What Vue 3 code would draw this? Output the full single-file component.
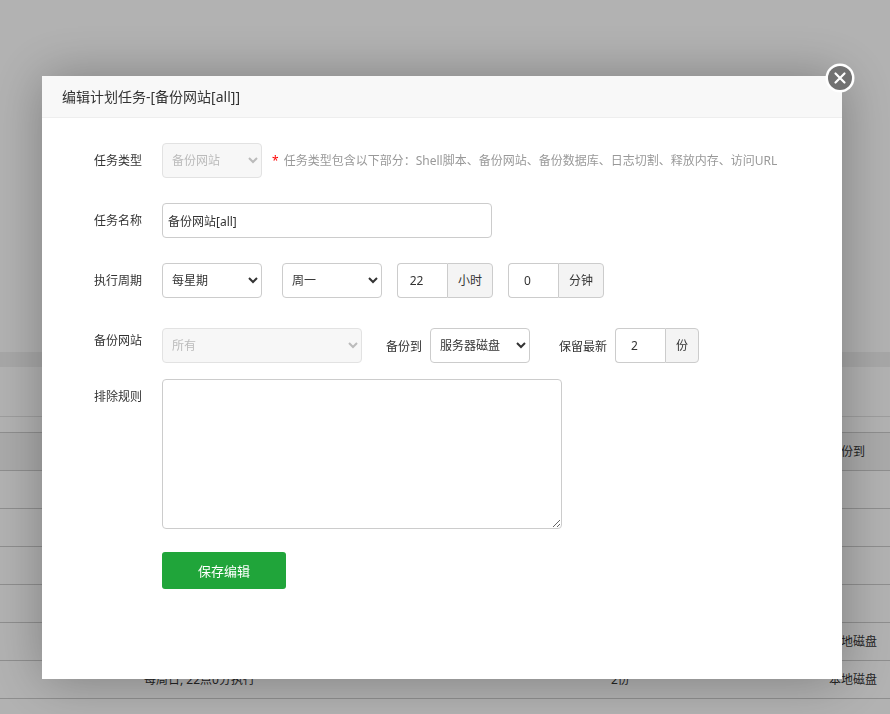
<template>
  <div class="page">
    <div class="panel"></div>
    <div class="list">
      <div class="listTop"></div>
      <table class="taskTable">
        <thead>
          <tr>
            <th class="colCheck"></th>
            <th class="colCycle"></th>
            <th class="colCount"></th>
            <th>备份到</th>
          </tr>
        </thead>
        <tbody>
          <tr v-for="(item, index) in tasks" :key="index">
            <td></td>
            <td>{{ item.cycle }}</td>
            <td>{{ item.count }}</td>
            <td>{{ item.target }}</td>
          </tr>
        </tbody>
      </table>
    </div>
  </div>

  <div class="overlay">
    <div class="dialog" role="dialog" aria-labelledby="dialogTitle">
      <div class="title" id="dialogTitle">编辑计划任务-[备份网站[all]]</div>
      <button class="close" type="button" aria-label="关闭">
        <svg width="30" height="30" viewBox="0 0 30 30">
          <circle cx="15" cy="15" r="14.5" fill="#fff" />
          <circle cx="15" cy="15" r="12" fill="#717171" />
          <path
            d="M10.5 10.5l9 9M19.5 10.5l-9 9"
            stroke="#fff"
            stroke-width="2.2"
            stroke-linecap="round"
          />
        </svg>
      </button>

      <form class="form" @submit.prevent>
        <div class="line">
          <label class="name" for="type">任务类型</label>
          <div class="info">
            <select id="type" v-model="form.type" disabled>
              <option>备份网站</option>
            </select>
            <p class="hint">
              <span class="star">*</span>
              任务类型包含以下部分：Shell脚本、备份网站、备份数据库、日志切割、释放内存、访问URL
            </p>
          </div>
        </div>

        <div class="line">
          <label class="name" for="taskName">任务名称</label>
          <div class="info">
            <input id="taskName" class="nameInput" type="text" v-model="form.name" />
          </div>
        </div>

        <div class="line">
          <label class="name" for="cycle">执行周期</label>
          <div class="info">
            <select id="cycle" v-model="form.cycle">
              <option v-for="item in cycles" :key="item">{{ item }}</option>
            </select>
            <select class="week" v-model="form.week" aria-label="星期">
              <option v-for="item in weeks" :key="item">{{ item }}</option>
            </select>
            <div class="group">
              <input id="hour" type="number" v-model="form.hour" />
              <label for="hour">小时</label>
            </div>
            <div class="group">
              <input id="minute" type="number" v-model="form.minute" />
              <label for="minute">分钟</label>
            </div>
          </div>
        </div>

        <div class="line siteLine">
          <label class="name" for="site">备份网站</label>
          <div class="info">
            <select id="site" class="siteSelect" v-model="form.site" disabled>
              <option>所有</option>
            </select>
            <label class="inlineName" for="target">备份到</label>
            <select id="target" v-model="form.target">
              <option>服务器磁盘</option>
            </select>
            <label class="inlineName keepName" for="keep">保留最新</label>
            <div class="group keep">
              <input id="keep" type="number" v-model="form.keep" />
              <label for="keep">份</label>
            </div>
          </div>
        </div>

        <div class="line ruleLine">
          <label class="name" for="rules">排除规则</label>
          <div class="info">
            <textarea id="rules" v-model="form.rules"></textarea>
          </div>
        </div>

        <button class="save" type="submit">保存编辑</button>
      </form>
    </div>
  </div>
</template>

<script setup>
import { ref } from "vue";

const cycles = ["每天", "每星期", "每月"];
const weeks = ["周一", "周二", "周三", "周四", "周五", "周六", "周日"];

const form = ref({
  type: "备份网站",
  name: "备份网站[all]",
  cycle: "每星期",
  week: "周一",
  hour: 22,
  minute: 0,
  site: "所有",
  target: "服务器磁盘",
  keep: 2,
  rules: "",
});

const tasks = ref([
  {},
  {},
  {},
  {},
  { target: "本地磁盘" },
  { cycle: "每周日, 22点0分执行", count: "2份", target: "本地磁盘" },
  {},
]);
</script>

<style>
body {
  margin: 0;
  overflow: hidden;
  font-family: "Noto Sans", "Noto Sans CJK SC", sans-serif;
  font-size: 12px;
  color: #333;
}
</style>

<style scoped>
* {
  box-sizing: border-box;
}
.page {
  background: #f0f0f0;
}
.panel {
  height: 352px;
  background: #fff;
}
.list {
  margin-top: 15px;
  background: #fff;
}
.listTop {
  height: 50px;
  margin-bottom: 15px;
  border-bottom: 1px solid #e2e2e2;
}
.taskTable {
  width: 100%;
  table-layout: fixed;
  border-collapse: separate;
  border-spacing: 0;
  border-top: 1px solid #ccc;
}
.taskTable th,
.taskTable td {
  height: 38px;
  padding: 0 8px;
  border-bottom: 1px solid #ccc;
  font-weight: normal;
  line-height: 20px;
  text-align: left;
}
.taskTable th {
  background: #f4f4f4;
}
.colCheck {
  width: 136px;
}
.colCycle {
  width: 467px;
}
.colCount {
  width: 218px;
}
.overlay {
  position: fixed;
  inset: 0;
  padding: 76px 48px 35px 42px;
  background: rgba(0, 0, 0, 0.3);
}
.dialog {
  position: relative;
  max-width: 800px;
  padding-bottom: 90px;
  background: #fff;
  box-shadow: 1px 1px 50px rgba(0, 0, 0, 0.3);
}
.title {
  height: 42px;
  padding: 0 20px;
  line-height: 42px;
  font-size: 14px;
  background: #f8f8f8;
  border-bottom: 1px solid #eee;
}
.close {
  position: absolute;
  top: -13px;
  right: -13px;
  padding: 0;
  border: 0;
  background: none;
  cursor: pointer;
}
.close svg {
  display: block;
}
.form {
  padding-top: 25px;
}
.line {
  display: flex;
  margin-bottom: 25px;
}
.name {
  flex: none;
  width: 100px;
  margin-right: 20px;
  line-height: 35px;
  text-align: right;
}
.info {
  display: flex;
  align-items: center;
}
input,
select,
textarea {
  border: 1px solid #ccc;
  border-radius: 4px;
  background: #fff;
  color: #333;
  font-family: inherit;
  font-size: 12px;
}
input,
select {
  height: 35px;
  padding: 0 5px;
}
select {
  width: 100px;
}
select:disabled {
  background: #f7f7f7;
  border-color: #e2e2e2;
  color: #bbb;
  opacity: 1;
}
.hint {
  margin: 0 0 0 10px;
  color: #999;
  line-height: 35px;
  white-space: nowrap;
}
.star {
  margin-right: 2px;
  color: #f00;
}
.nameInput {
  width: 330px;
}
.week {
  margin-left: 20px;
}
.group {
  display: flex;
  margin-left: 15px;
}
.group input {
  width: 50px;
  padding: 0 12px 0 0;
  border-right: 0;
  border-radius: 4px 0 0 4px;
  text-align: center;
  appearance: textfield;
}
.group input::-webkit-inner-spin-button {
  appearance: none;
}
.group label {
  padding: 0 10px;
  line-height: 33px;
  background: #f4f4f4;
  border: 1px solid #ccc;
  border-radius: 0 4px 4px 0;
}
.siteLine {
  margin-bottom: 16px;
}
.siteLine .info {
  padding-top: 5px;
}
.siteSelect {
  width: 200px;
}
.inlineName {
  margin: 0 8px 0 24px;
}
.keepName {
  margin-left: 29px;
}
.keep {
  margin-left: 0;
}
.ruleLine {
  margin-bottom: 23px;
}
textarea {
  display: block;
  width: 400px;
  height: 150px;
  padding: 5px;
}
.save {
  display: block;
  width: 124px;
  height: 37px;
  margin-left: 120px;
  border: 0;
  border-radius: 3px;
  background: #20a53a;
  color: #fff;
  font-family: inherit;
  font-size: 13px;
  cursor: pointer;
}
</style>
